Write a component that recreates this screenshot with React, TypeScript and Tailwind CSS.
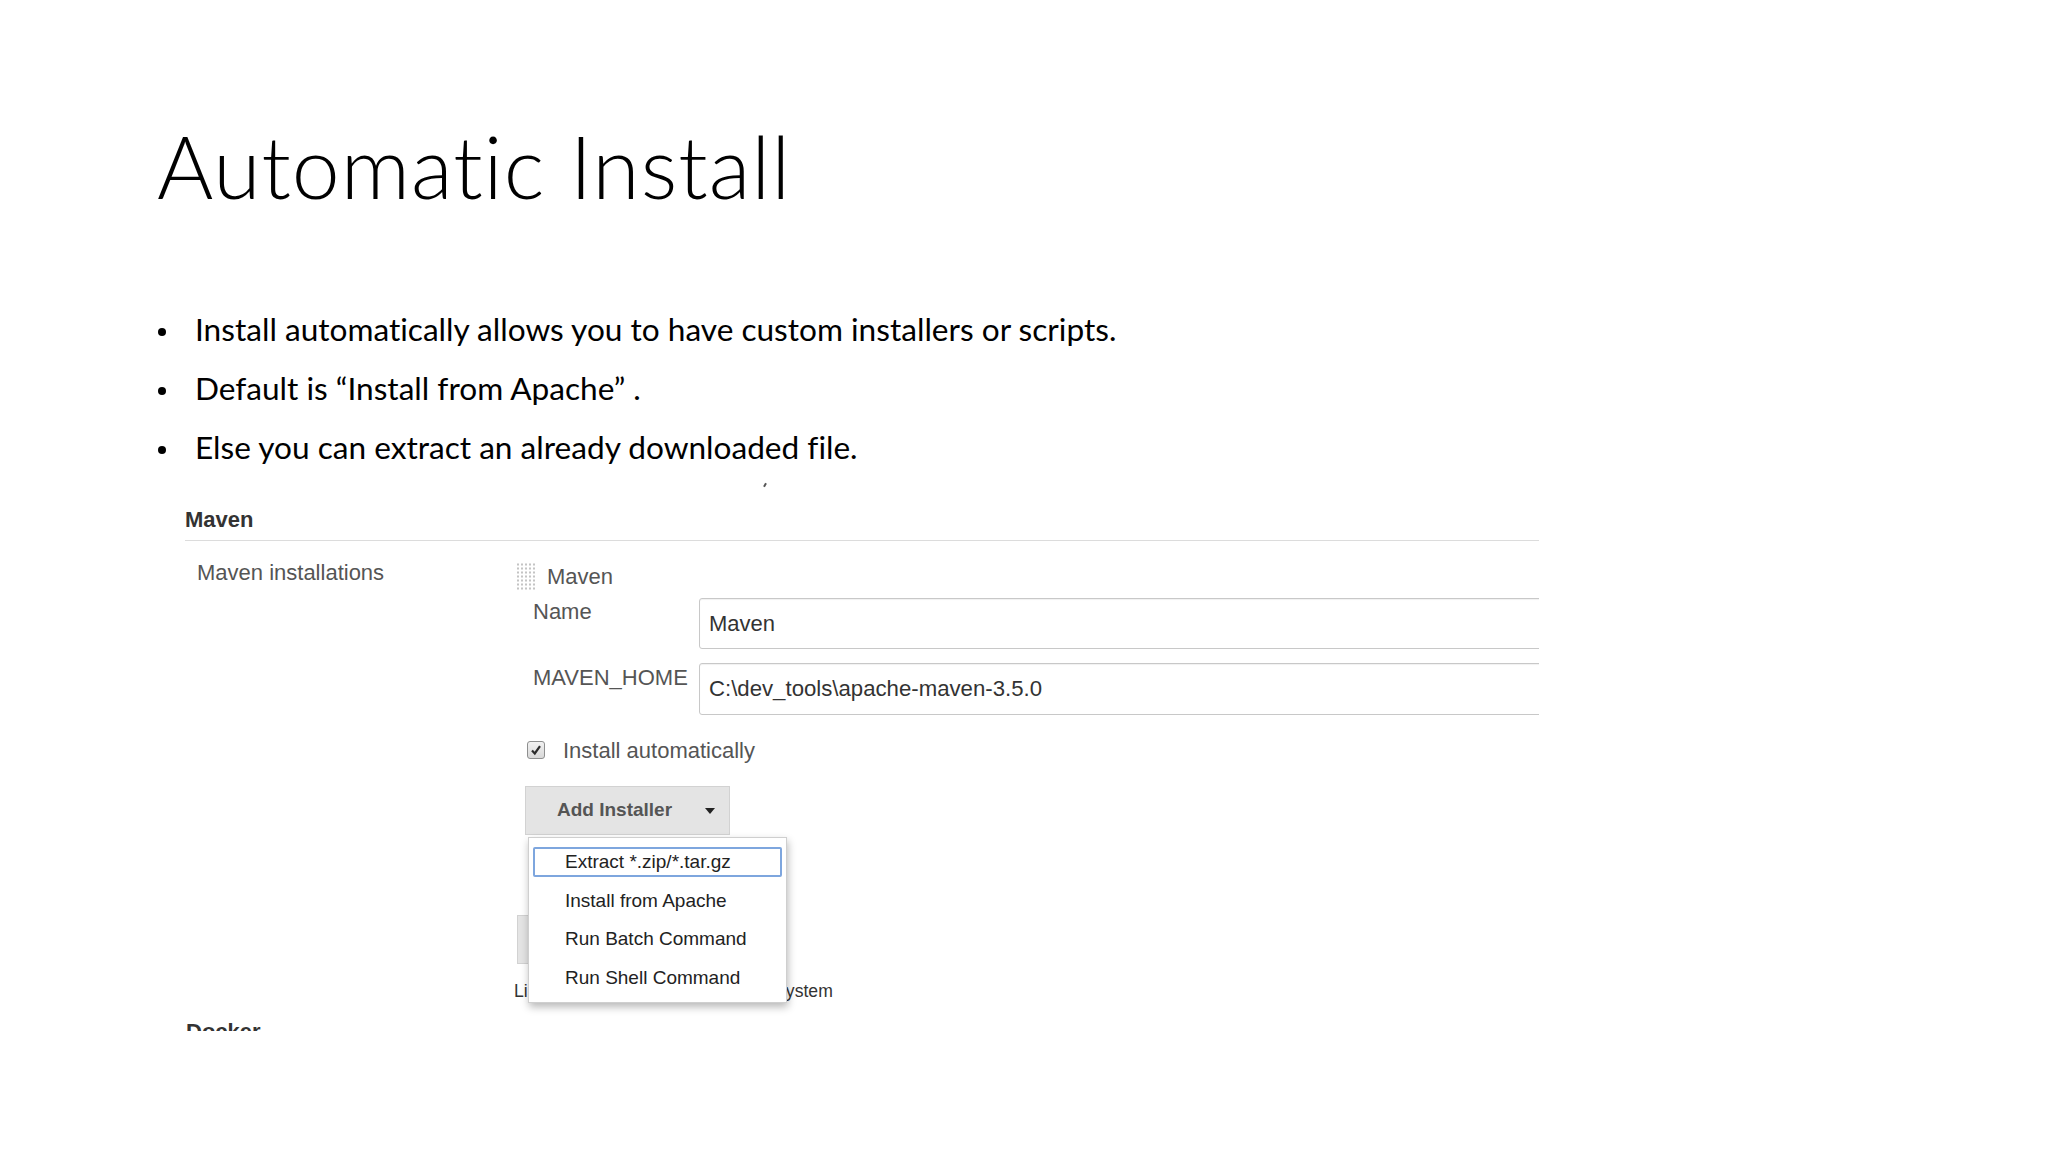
export default function App() {
  const bullets = [
    "Install automatically allows you to have custom installers or scripts.",
    "Default is \u201CInstall from Apache\u201D .",
    "Else you can extract an already downloaded file.",
  ];
  const installers = [
    "Extract *.zip/*.tar.gz",
    "Install from Apache",
    "Run Batch Command",
    "Run Shell Command",
  ];

  return (
    <div className="w-[2048px] h-[1152px] overflow-hidden bg-white text-black [font-variant-ligatures:none]">
      {/* slide title */}
      <h1 className="ml-[157px] pt-[123px] font-['Lato',sans-serif] text-[86px] font-light leading-[86px] tracking-[1px]">
        Automatic Install
      </h1>

      <ul className="ml-[158px] mt-[91px] font-['Lato',sans-serif] text-[31.6px] leading-[59px]">
        {bullets.map((b) => (
          <li key={b} className="flex items-center">
            <span className="w-[37px] shrink-0">
              <span className="block h-[8px] w-[8px] translate-y-[2px] rounded-full bg-black" />
            </span>
            <span>{b}</span>
          </li>
        ))}
      </ul>

      {/* jenkins screenshot */}
      <div className="relative ml-[185px] mt-[3px] h-[551px] w-[1354px] overflow-hidden font-['Liberation_Sans',Arial,sans-serif]">
        <span className="absolute left-[579px] top-[3px] h-[4px] w-[2px] rotate-[30deg] bg-[#555]" />

        <div className="border-b border-[#dcdcdc] pb-[7px] pt-[27px]">
          <h2 className="text-[22px] font-bold leading-[26px] text-[#333]">Maven</h2>
        </div>

        <div className="mt-[19px] grid grid-cols-[320px_1fr] pl-[12px]">
          <div className="text-[22px] leading-[26px] text-[#555]">Maven installations</div>

          <div className="flex flex-col">
            <div className="flex h-[30px] items-start">
              <svg width="18" height="27" viewBox="0 0 18 27" className="mt-[3px]">
                {[0, 4, 8, 12, 16].map((x) =>
                  [0, 4, 8, 12, 16, 20, 24].map((y) => (
                    <rect key={x + "-" + y} x={x} y={y + 0.5} width="2" height="2" fill="#c4c4c4" />
                  ))
                )}
              </svg>
              <span className="ml-[12px] mt-[4px] text-[22px] leading-[26px] text-[#555]">Maven</span>
            </div>

            <div className="mt-[8px] flex">
              <span className="ml-[16px] mt-[1px] w-[166px] shrink-0 text-[22px] leading-[26px] text-[#555]">Name</span>
              <div className="-mr-[20px] flex h-[51px] flex-1 items-center rounded-[3px] border border-[#c8c8c8] pl-[9px] text-[22px] text-[#333] shadow-[inset_0_1px_1px_rgba(0,0,0,0.06)]">
                Maven
              </div>
            </div>

            <div className="mt-[14px] flex">
              <span className="ml-[16px] mt-[2px] w-[166px] shrink-0 text-[22px] leading-[26px] text-[#555]">MAVEN_HOME</span>
              <div className="-mr-[20px] flex h-[52px] flex-1 items-center rounded-[3px] border border-[#c8c8c8] pl-[9px] text-[22.2px] text-[#333] shadow-[inset_0_1px_1px_rgba(0,0,0,0.06)]">
                C:\dev_tools\apache-maven-3.5.0
              </div>
            </div>

            <div className="mt-[23px] flex items-start">
              <span className="ml-[10px] mt-[3px] flex h-[18px] w-[18px] items-center justify-center rounded-[3px] border border-[#8e8f8f] bg-gradient-to-b from-[#f2f2f2] to-[#d8d8d8]">
                <svg width="12" height="12" viewBox="0 0 12 12">
                  <path d="M2 6.5 L4.8 9.5 L10 2.2" fill="none" stroke="#2b2b2b" strokeWidth="2.2" />
                </svg>
              </span>
              <span className="ml-[18px] text-[22px] leading-[26px] text-[#555]">Install automatically</span>
            </div>

            <div className="relative ml-[8px] mt-[22px] w-[205px]">
              <div className="flex h-[49px] w-[205px] items-center border border-[#d2d2d2] bg-[#e4e4e4] pl-[31px] text-[19px] font-bold text-[#555]">
                Add Installer
                <svg width="10" height="6" viewBox="0 0 10 6" className="ml-auto mr-[14px]">
                  <path d="M0 0 H10 L5 6 Z" fill="#222" />
                </svg>
              </div>

              <div className="absolute left-[3px] top-[51px] z-10 w-[259px] border border-[#cfcfcf] bg-white px-[4px] pb-[9px] pt-[9px] shadow-[1px_4px_8px_rgba(0,0,0,0.28)]">
                {installers.map((item, i) => (
                  <div
                    key={item}
                    className={
                      "mb-[8.5px] h-[30px] rounded-[2px] border-2 pl-[30px] text-[19px] leading-[26px] text-[#222] last:mb-0 " +
                      (i === 0 ? "border-[#7ea6de]" : "border-transparent")
                    }
                  >
                    {item}
                  </div>
                ))}
              </div>
            </div>

            {/* button hidden behind the menu */}
            <div className="mt-[80px] h-[49px] w-[200px] border border-[#d2d2d2] bg-[#e4e4e4]" />

            <div className="-ml-[3px] mt-[16px] text-[17.6px] leading-[22px] text-[#333]">
              List of Maven installations on this system
            </div>
          </div>
        </div>

        <h2 className="ml-[1px] mt-[17px] text-[22px] font-bold leading-[26px] text-[#333]">Docker</h2>
      </div>
    </div>
  );
}
